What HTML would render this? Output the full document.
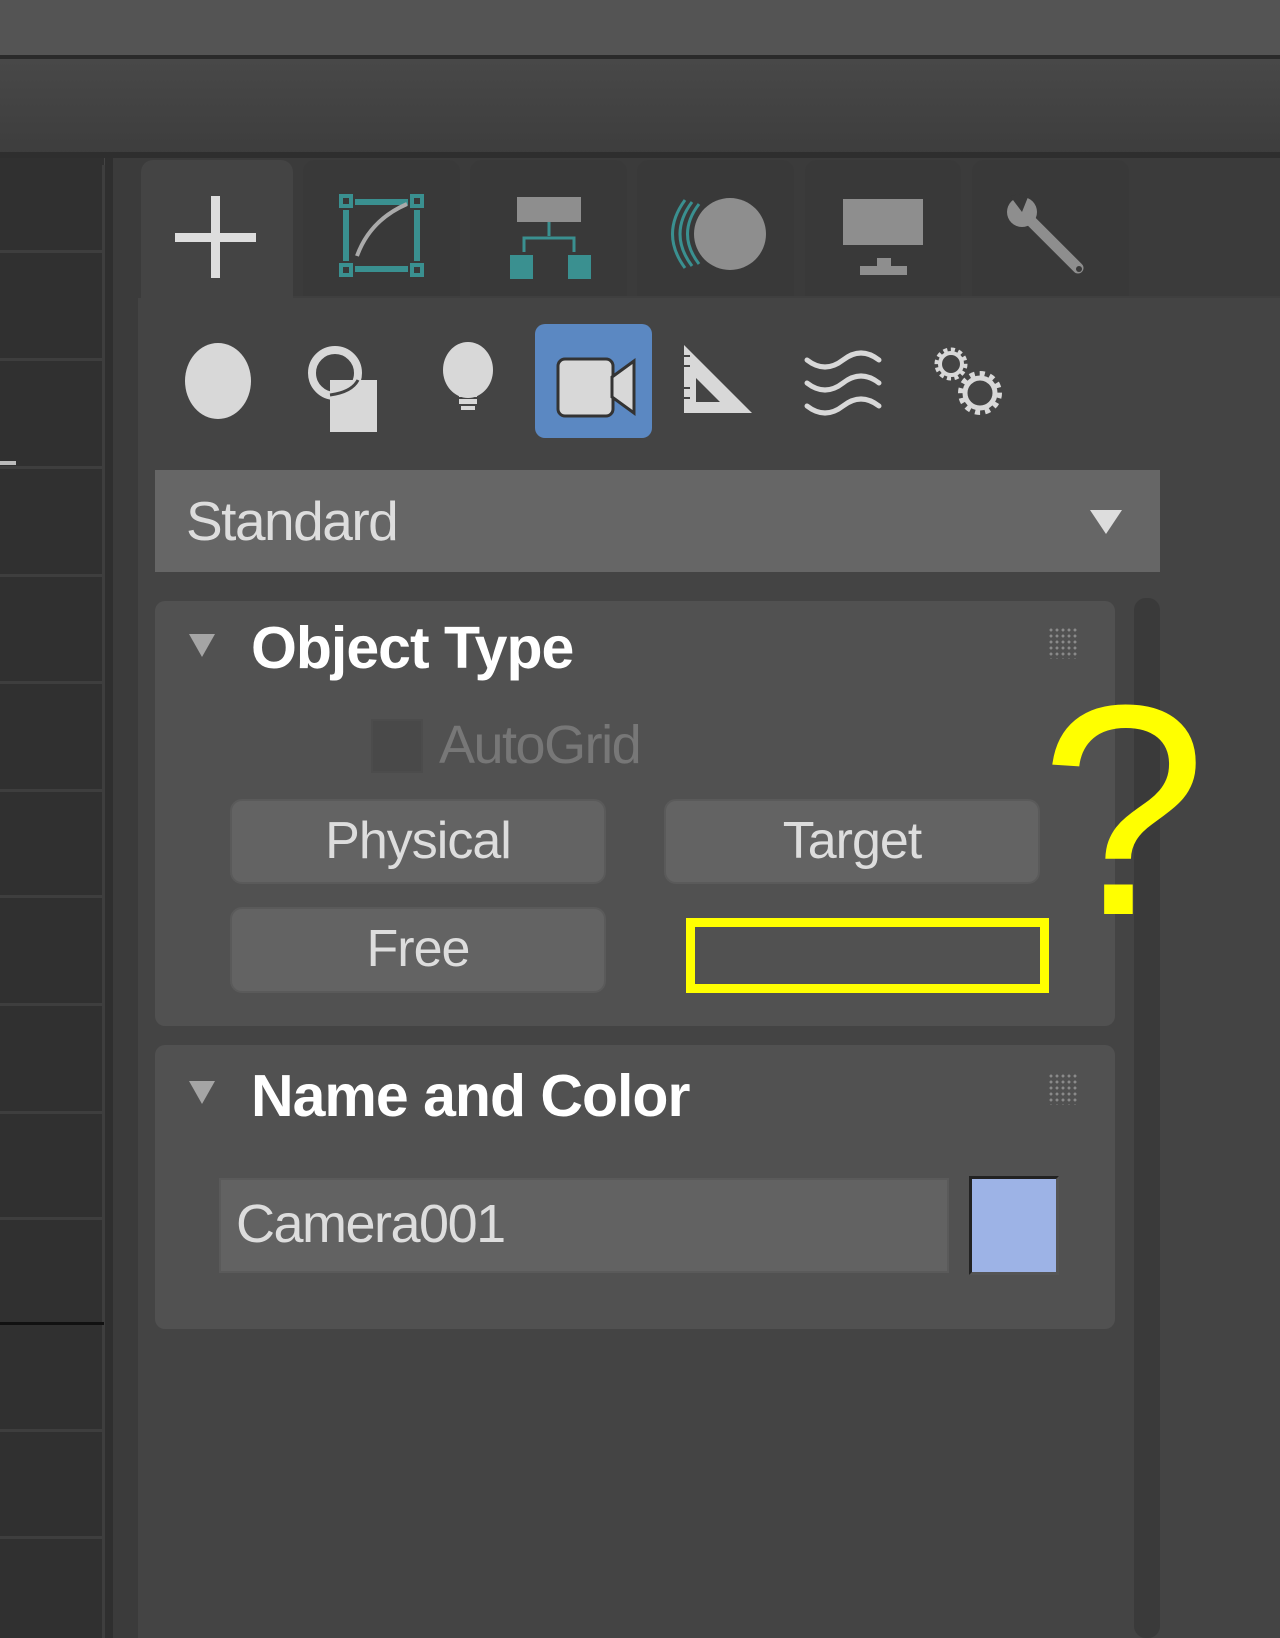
<!DOCTYPE html>
<html><head><meta charset="utf-8"><style>
*{margin:0;padding:0;box-sizing:border-box}
body{width:1280px;height:1638px;background:#444;position:relative;overflow:hidden;font-family:"Liberation Sans",sans-serif}
.a{position:absolute}
.hl{position:absolute;left:0;width:104px;height:3px;background:#3e3e3e}
.tab{position:absolute;top:160px;height:138px;background:#393939;border-radius:12px 12px 0 0}
.btn{position:absolute;background:#636363;border-radius:12px;border:2px solid #5a5a5a;color:#ddd;font-size:52px;text-align:center;line-height:80px;letter-spacing:-1px}
.roll{position:absolute;left:155px;width:960px;background:#515151;border-radius:10px}
.title{position:absolute;left:96px;color:#fff;font-weight:bold;font-size:59px;letter-spacing:-1px}
.tri{position:absolute;left:34px;width:0;height:0;border-left:13px solid transparent;border-right:13px solid transparent;border-top:23px solid #a5a5a5}
.grip{position:absolute;left:893px;width:30px;height:32px;background-image:radial-gradient(circle,#8a8a8a 1.3px,transparent 1.6px);background-size:6px 6px}
</style></head><body>
<div class="a" style="left:0;top:0;width:1280px;height:55px;background:#545454"></div>
<div class="a" style="left:0;top:55px;width:1280px;height:4px;background:#2a2a2a"></div>
<div class="a" style="left:0;top:59px;width:1280px;height:95px;background:linear-gradient(#484848,#3d3d3d)"></div>
<div class="a" style="left:0;top:152px;width:1280px;height:6px;background:#2e2e2e"></div>
<div class="a" style="left:0;top:158px;width:104px;height:1480px;background:#303030"></div>
<div class="a" style="left:102px;top:165px;width:3px;height:1473px;background:#3e3e3e"></div>
<div class="a" style="left:105px;top:158px;width:8px;height:1480px;background:#2f2f2f"></div>
<div class="a" style="left:113px;top:158px;width:25px;height:1480px;background:#3b3b3b"></div>
<div class="hl" style="top:250px"></div><div class="hl" style="top:358px"></div><div class="hl" style="top:466px"></div><div class="hl" style="top:574px"></div><div class="hl" style="top:681px"></div><div class="hl" style="top:789px"></div><div class="hl" style="top:895px"></div><div class="hl" style="top:1003px"></div><div class="hl" style="top:1111px"></div><div class="hl" style="top:1217px"></div><div class="hl" style="top:1322px;background:#111"></div><div class="hl" style="top:1429px"></div><div class="hl" style="top:1536px"></div>
<div class="a" style="left:0;top:461px;width:16px;height:4px;background:#bbb"></div>
<div class="a" style="left:138px;top:158px;width:1142px;height:140px;background:#3b3b3b"></div>
<div class="tab" style="left:141px;width:152px;background:#444"></div>
<div class="tab" style="left:303px;width:157px"></div>
<div class="tab" style="left:470px;width:157px"></div>
<div class="tab" style="left:637px;width:157px"></div>
<div class="tab" style="left:805px;width:156px"></div>
<div class="tab" style="left:972px;width:157px"></div>
<div class="a" style="left:293px;top:296px;width:987px;height:2px;background:#3f3f3f"></div>
<div class="a" style="left:138px;top:298px;width:1142px;height:1340px;background:#444"></div>
<svg class="a" style="left:0;top:0" width="1280" height="460">
<rect x="211" y="196" width="9" height="82" fill="#ddd"/><rect x="175" y="233" width="81" height="9" fill="#ddd"/>
<g fill="none" stroke="#3a9090" stroke-width="4"><rect x="341" y="196" width="10" height="10"/><rect x="412" y="196" width="10" height="10"/><rect x="341" y="265" width="10" height="10"/><rect x="412" y="265" width="10" height="10"/></g>
<g fill="#3a9090"><rect x="355" y="199" width="53" height="6"/><rect x="355" y="266" width="53" height="6"/><rect x="343" y="210" width="6" height="51"/><rect x="414" y="210" width="6" height="51"/></g>
<path d="M357 256 Q370 220 407 204" stroke="#aaa" stroke-width="4" fill="none"/>
<rect x="517" y="197" width="64" height="25" fill="#8e8e8e"/>
<path d="M549 222V236M524 252V238H574V252" stroke="#3a9090" stroke-width="3" fill="none"/>
<rect x="510" y="255" width="23" height="24" fill="#3a9090"/><rect x="568" y="255" width="23" height="24" fill="#3a9090"/>
<g fill="none" stroke="#3a9090" stroke-width="3"><path d="M685 200 Q660 234 685 268"/><path d="M692 202 Q668 234 692 266"/><path d="M699 204 Q676 234 699 264"/></g>
<ellipse cx="730" cy="234" rx="36" ry="36" fill="#8e8e8e"/>
<rect x="843" y="199" width="80" height="46" fill="#8e8e8e"/><rect x="877" y="258" width="14" height="8" fill="#8e8e8e"/><rect x="860" y="266" width="47" height="9" fill="#8e8e8e"/>
<path d="M1028 218 L1078 268" stroke="#8e8e8e" stroke-width="11" stroke-linecap="round"/>
<circle cx="1022" cy="212" r="15" fill="#8e8e8e"/>
<path d="M1022 212 L1010 196 L1030 192Z" fill="#393939"/>
<circle cx="1079" cy="269" r="3" fill="#393939"/>
<rect x="535" y="324" width="117" height="114" rx="10" fill="#5b88c2"/>
<ellipse cx="218" cy="381" rx="33" ry="38" fill="#d8d8d8"/>
<circle cx="335" cy="373" r="23" fill="none" stroke="#d8d8d8" stroke-width="8"/>
<rect x="330" y="380" width="47" height="52" fill="#d8d8d8"/><path d="M330 395 Q352 392 358 380" stroke="#444" stroke-width="3" fill="none"/>
<ellipse cx="468" cy="370" rx="25" ry="28" fill="#d8d8d8"/>
<rect x="459" y="392" width="18" height="5" fill="#d8d8d8"/><rect x="459" y="399" width="18" height="5" fill="#d8d8d8"/><rect x="461" y="406" width="14" height="4" fill="#d8d8d8"/>
<rect x="558" y="359" width="55" height="57" rx="7" fill="#d8d8d8" stroke="#333" stroke-width="3"/>
<path d="M612 377 L634 361 V413 L612 397Z" fill="#d8d8d8" stroke="#333" stroke-width="3"/>
<path d="M684 345 V413 H752Z M696 378 V402 H720Z" fill="#d8d8d8" fill-rule="evenodd"/>
<g stroke="#444" stroke-width="2"><path d="M684 356h6M684 366h6M684 388h6M684 398h6"/></g>
<g stroke="#d8d8d8" stroke-width="5" fill="none" stroke-linecap="round"><path d="M807 360 q18 14 36 0 t36 0"/><path d="M807 383 q18 14 36 0 t36 0"/><path d="M807 406 q18 14 36 0 t36 0"/></g>
<g stroke="#d8d8d8" fill="none"><circle cx="951" cy="364" r="11" stroke-width="4"/><circle cx="951" cy="364" r="14" stroke-width="5" stroke-dasharray="4 3.3"/><circle cx="980" cy="393" r="15" stroke-width="5"/><circle cx="980" cy="393" r="19" stroke-width="6" stroke-dasharray="5 4.9"/></g>
</svg>
<div class="a" style="left:155px;top:470px;width:1005px;height:102px;background:#666"></div>
<div class="a" style="left:186px;top:489px;color:#ddd;font-size:55px;letter-spacing:-1.5px">Standard</div>
<div class="a" style="left:1090px;top:510px;border-left:16px solid transparent;border-right:16px solid transparent;border-top:24px solid #ddd"></div>
<div class="a" style="left:1134px;top:598px;width:26px;height:1040px;background:#3a3a3a;border-radius:12px"></div>
<div class="roll" style="top:601px;height:425px">
<div class="tri" style="top:33px"></div>
<div class="title" style="top:13px">Object Type</div>
<div class="grip" style="top:26px"></div>
<div class="a" style="left:216px;top:118px;width:52px;height:54px;background:#494949;border:2px solid #4c4c4c"></div>
<div class="a" style="left:284px;top:113px;color:#777;font-size:54px;letter-spacing:-1.5px">AutoGrid</div>
</div>
<div class="btn" style="left:230px;top:799px;width:376px;height:85px">Physical</div>
<div class="btn" style="left:664px;top:799px;width:376px;height:85px">Target</div>
<div class="btn" style="left:230px;top:907px;width:376px;height:86px">Free</div>
<div class="a" style="left:686px;top:918px;width:363px;height:75px;border:9px solid #ffff00"></div>
<div class="a" style="left:1040px;top:660px;color:#ffff00;font-size:300px;line-height:300px">?</div>
<div class="roll" style="top:1045px;height:284px">
<div class="tri" style="top:36px"></div>
<div class="title" style="top:17px">Name and Color</div>
<div class="grip" style="top:28px"></div>
</div>
<div class="a" style="left:219px;top:1178px;width:730px;height:95px;background:#626262;border:2px solid #5a5a5a"></div>
<div class="a" style="left:236px;top:1193px;color:#ddd;font-size:54px;letter-spacing:-1.5px">Camera001</div>
<div class="a" style="left:969px;top:1176px;width:90px;height:99px;background:#9db3e6;border:3px solid #222;border-right-color:#555;border-bottom-color:#555"></div>
</body></html>
